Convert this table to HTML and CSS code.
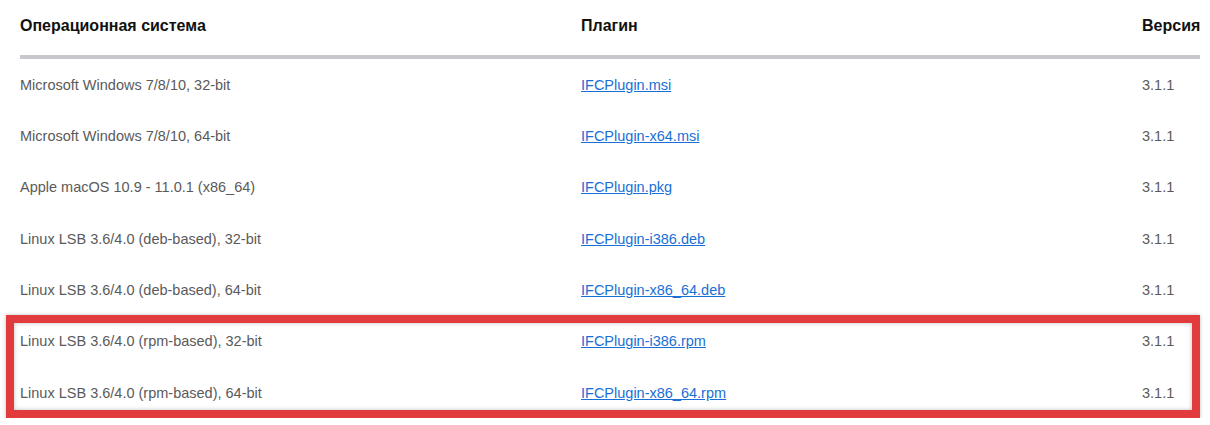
FILE: index.html
```html
<!DOCTYPE html>
<html>
  <head>
    <title>IFCPlugin - Загрузка</title>
    <meta charset="utf-8">
    <link rel="stylesheet" href="styles.css">
  </head>
  <body>
  <div id="downloads">
    <div class="row head">
      <div class="cell">Операционная система</div>
      <div class="cell">Плагин</div>
      <div class="cell">Версия</div>
    </div>
    <div class="row">
      <div class="cell">Microsoft Windows 7/8/10, 32-bit</div>
      <div class="cell"><a href="#">IFCPlugin.msi</a></div>
      <div class="cell">3.1.1</div>
    </div>
    <div class="row">
      <div class="cell">Microsoft Windows 7/8/10, 64-bit</div>
      <div class="cell"><a href="#">IFCPlugin-x64.msi</a></div>
      <div class="cell">3.1.1</div>
    </div>
    <div class="row">
      <div class="cell">Apple macOS 10.9 - 11.0.1 (x86_64)</div>
      <div class="cell"><a href="#">IFCPlugin.pkg</a></div>
      <div class="cell">3.1.1</div>
    </div>
    <div class="row">
      <div class="cell">Linux LSB 3.6/4.0 (deb-based), 32-bit</div>
      <div class="cell"><a href="#">IFCPlugin-i386.deb</a></div>
      <div class="cell">3.1.1</div>
    </div>
    <div class="row">
      <div class="cell">Linux LSB 3.6/4.0 (deb-based), 64-bit</div>
      <div class="cell"><a href="#">IFCPlugin-x86_64.deb</a></div>
      <div class="cell">3.1.1</div>
    </div>
    <div class="row">
      <div class="cell">Linux LSB 3.6/4.0 (rpm-based), 32-bit</div>
      <div class="cell"><a href="#">IFCPlugin-i386.rpm</a></div>
      <div class="cell">3.1.1</div>
    </div>
    <div class="row">
      <div class="cell">Linux LSB 3.6/4.0 (rpm-based), 64-bit</div>
      <div class="cell"><a href="#">IFCPlugin-x86_64.rpm</a></div>
      <div class="cell">3.1.1</div>
    </div>
    <div class="highlight"></div>
  </div>
  </body>
</html>
```

FILE: styles.css
```css
* {
  font-family: "Liberation Sans", Arial, sans-serif;
  padding: 0px;
  margin: 0px;
  box-sizing: border-box;
}
html {
  background-color: white;
}
#downloads {
  position: relative;
  width: 1200px;
  padding-left: 20px;
}
.row {
  display: grid;
  grid-template-columns: 561px 561px 58px;
  height: 51.33px;
  align-items: center;
  font-size: 14.5px;
  color: #5a5a5a;
}
.row.head {
  height: 59px;
  padding-bottom: 4px;
  border-bottom: 4px solid #c8c8cc;
  font-size: 16px;
  font-weight: bold;
  color: #111;
}
.cell a {
  color: #1a6fd6;
  text-decoration: underline;
}
.highlight {
  position: absolute;
  left: 6px;
  top: 315px;
  width: 1194px;
  height: 103px;
  border: 8px solid #e23b3d;
  box-shadow: 0 0 4px rgba(0,0,0,0.25), inset 0 0 4px rgba(0,0,0,0.25);
}
```
